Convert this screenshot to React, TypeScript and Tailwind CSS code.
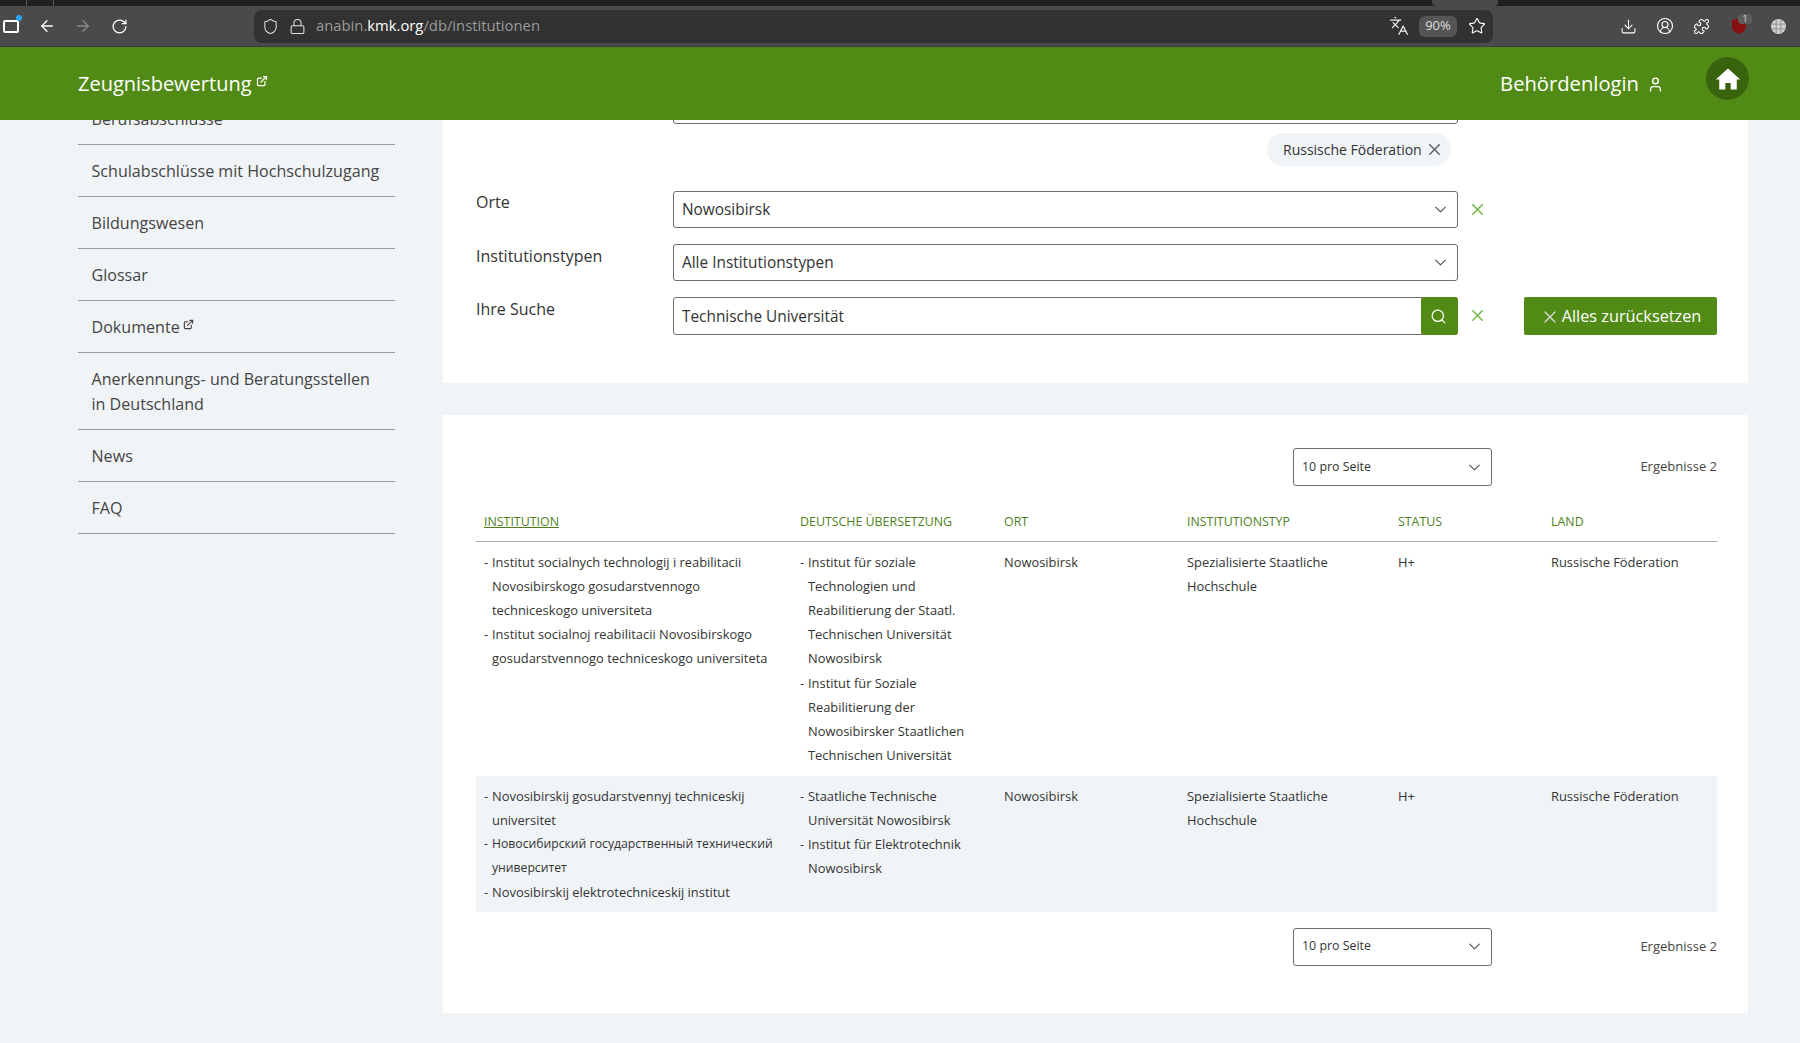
import { ArrowLeft, ArrowRight, ChevronDown, Download, ExternalLink, Languages, Lock, RotateCw, Search, Shield, Star, Puzzle, CircleUserRound, User, X } from "lucide-react";

const nav = [
  ["Berufsabschlüsse", false],
  ["Schulabschlüsse mit Hochschulzugang", false],
  ["Bildungswesen", false],
  ["Glossar", false],
  ["Dokumente", true],
  ["Anerkennungs- und Beratungsstellen in Deutschland", false],
  ["News", false],
  ["FAQ", false],
] as const;

const rows = [
  {
    a: ["Institut socialnych technologij i reabilitacii Novosibirskogo gosudarstvennogo techniceskogo universiteta", "Institut socialnoj reabilitacii Novosibirskogo gosudarstvennogo techniceskogo universiteta"],
    b: ["Institut für soziale Technologien und Reabilitierung der Staatl. Technischen Universität Nowosibirsk", "Institut für Soziale Reabilitierung der Nowosibirsker Staatlichen Technischen Universität"],
    tint: false,
  },
  {
    a: ["Novosibirskij gosudarstvennyj techniceskij universitet", "Новосибирский государственный технический университет", "Novosibirskij elektrotechniceskij institut"],
    b: ["Staatliche Technische Universität Nowosibirsk", "Institut für Elektrotechnik Nowosibirsk"],
    tint: true,
  },
];

function Dashed({ items, gap = "" }: { items: string[]; gap?: string }) {
  return (
    <ul className={gap}>
      {items.map((t) => (
        <li key={t} className={`relative pl-2 ${/[а-я]/.test(t) ? "text-[12.2px]" : ""}`}>
          <span className="absolute left-0 top-0">-</span>
          {t}
        </li>
      ))}
    </ul>
  );
}

function Select({ label }: { label: string }) {
  return (
    <div className="flex h-[37px] w-[785px] items-center justify-between rounded-[3px] border border-[#6e6e6e] bg-white pl-2 pr-[7px] text-[15.4px] text-[#333]">
      <span className="mt-[1px]">{label}</span>
      <ChevronDown size={19} strokeWidth={1.5} className="text-[#555]" />
    </div>
  );
}

function Pager({ className }: { className: string }) {
  return (
    <div className={`flex items-center justify-end ${className}`}>
      <div className="flex h-[38px] w-[199px] items-center justify-between rounded-[3px] border border-[#6e6e6e] bg-white pl-2 pr-[7px] text-[12.4px] text-[#333]">
        <span>10 pro Seite</span>
        <ChevronDown size={19} strokeWidth={1.5} className="text-[#555]" />
      </div>
      <div className="w-[225px] text-right text-[13px] text-[#444]">Ergebnisse 2</div>
    </div>
  );
}

export default function App() {
  return (
    <div className="flex h-[1043px] w-[1800px] flex-col overflow-hidden bg-[#f1f4f7] font-['Open_Sans',sans-serif] text-[#333]">
      {/* Browser chrome */}
      <div className="flex h-[6px] bg-[#202020]">
        <span className="ml-[26px] w-px bg-[#555]" />
        <span className="ml-[26px] w-px bg-[#555]" />
        <span className="ml-[1378px] w-[66px] rounded-b bg-[#4a4a4a]" />
      </div>
      <div className="flex h-[41px] items-center border-b border-[#3c3c3c] bg-[#4a4a4a] text-white">
        <div className="relative ml-[3px] h-[13px] w-[16px] rounded-[2px] border-2 border-white">
          <span className="absolute -right-[5px] -top-[7px] h-[6px] w-[6px] rounded-full bg-[#2aa5f5]" />
        </div>
        <ArrowLeft size={18} strokeWidth={1.75} className="ml-[19px]" />
        <ArrowRight size={18} strokeWidth={1.75} className="ml-[18px] text-[#8a8a8a]" />
        <RotateCw size={17} strokeWidth={1.75} className="ml-[19px]" />
        <div className="ml-[126px] flex h-[33px] w-[1239px] items-center rounded-lg bg-[#323232] pl-[8px] pr-[7px]">
          <Shield size={17} strokeWidth={1.5} className="text-[#ddd]" />
          <Lock size={17} strokeWidth={1.5} className="ml-[10px] text-[#ddd]" />
          <span className="mb-[1px] ml-[10px] text-[14.8px] text-[#9a9a9a]">
            anabin.<span className="text-white">kmk.org</span>/db/institutionen
          </span>
          <Languages size={20} strokeWidth={1.5} className="ml-auto text-[#eee]" />
          <span className="ml-[10px] flex h-[21px] w-[38px] items-center justify-center rounded-md bg-[#555] text-[13px] text-[#ddd]">90%</span>
          <Star size={18} strokeWidth={1.5} className="ml-[11px]" />
        </div>
        <Download size={17} strokeWidth={1.5} className="ml-[127px]" />
        <CircleUserRound size={18} strokeWidth={1.5} className="ml-[19px]" />
        <Puzzle size={17} strokeWidth={1.5} className="ml-[19px]" />
        <div className="relative ml-[22px]">
          <svg viewBox="0 0 14 16" className="h-[16px] w-[14px]">
            <path d="M0 2 7 .5 14 2v6c0 4-3 6.500-7 8-4-1.500-7-4-7-8z" fill="#8a1010" />
          </svg>
          <span className="absolute -right-[6px] -top-[4px] flex h-[10px] w-[14px] items-center justify-center rounded-sm bg-[#5e5e5e] text-[9px] text-[#ddd]">1</span>
        </div>
        <svg viewBox="0 0 16 16" className="ml-[25px] h-[15px] w-[15px]" fill="none" stroke="#8e8e8e" strokeWidth="1">
          <circle cx="8" cy="8" r="8" fill="#cfcfcf" stroke="none" />
          <path d="M1 5.500h14M1 10.500h14M5.500 1v14M10.500 1v14" />
        </svg>
      </div>

      {/* Green header */}
      <header className="relative z-10 flex h-[73px] shrink-0 items-center bg-[#518b15] pl-[78px] text-white">
        <span className="text-[20px]">Zeugnisbewertung</span>
        <ExternalLink size={12} strokeWidth={2.5} className="mb-[6px] ml-[4px]" />
        <span className="ml-auto text-[20.2px]">Behördenlogin</span>
        <User size={17} strokeWidth={2} className="ml-[8px] mt-[2px]" />
        <div className="mb-[10px] ml-[42px] mr-[51px] flex h-[43px] w-[43px] items-center justify-center rounded-full bg-[#38640e]">
          <svg viewBox="0 0 24 24" className="h-[28px] w-[28px] fill-white">
            <path d="M12 3 1.500 12.400h3V21h5.200v-5.600h4.600V21h5.200v-8.600h3L12 3z" />
          </svg>
        </div>
      </header>

      {/* Body */}
      <div className="flex min-h-0 flex-1 overflow-hidden">
        <aside className="ml-[78px] w-[317px] shrink-0">
          <ul className="-mt-[27px] text-[16.1px] leading-[25px] text-[#444]">
            {nav.map(([t, ext]) => (
              <li key={t} className="border-b border-[#9c9c9c] px-[13.500px] pb-[12px] pt-[14px]">
                {t}
                {ext && <ExternalLink size={11} strokeWidth={2.5} className="mb-2 ml-[3px] inline" />}
              </li>
            ))}
          </ul>
        </aside>

        <main className="ml-[48px] w-[1305px] shrink-0">
          <section className="h-[296px] bg-white pl-[33px] pr-[31px]">
            <div className="ml-[197px] -mt-[33px]">
              <Select label="" />
            </div>
            <div className="ml-[197px] mt-[9px] flex w-[785px] justify-end pr-[7px]">
              <div className="flex h-[33px] w-[184px] items-center gap-[3px] rounded-full bg-[#f1f4f7] pl-[16px] text-[14px] text-[#333]">
                Russische Föderation
                <X size={19} strokeWidth={1.5} className="text-[#555]" />
              </div>
            </div>
            <div className="mt-[25px] flex h-[37px]">
              <label className="w-[197px] text-[16px] leading-[22px]">Orte</label>
              <Select label="Nowosibirsk" />
              <X size={19} strokeWidth={1.75} className="ml-[10px] mt-[9px] text-[#6db33f]" />
            </div>
            <div className="mt-[16px] flex h-[37px]">
              <label className="w-[197px] pt-[1px] text-[16px] leading-[22px]">Institutionstypen</label>
              <Select label="Alle Institutionstypen" />
            </div>
            <div className="mt-[16px] flex h-[38px]">
              <label className="w-[197px] pt-[1px] text-[16px] leading-[22px]">Ihre Suche</label>
              <div className="flex w-[785px] rounded-[3px] border border-[#6e6e6e] bg-white pl-2 text-[15.4px]">
                <span className="mt-[1px] flex-1 self-center">Technische Universität</span>
                <div className="-my-px -mr-px flex w-[37px] items-center justify-center rounded-[3px] bg-[#518b15] pr-[2px] text-white">
                  <Search size={17} strokeWidth={1.75} />
                </div>
              </div>
              <X size={19} strokeWidth={1.75} className="ml-[10px] mt-[9px] text-[#6db33f]" />
              <div className="ml-[37px] flex w-[193px] items-center justify-center gap-[2px] rounded-[2px] bg-[#518b15] pt-[1px] text-[16.3px] text-white">
                <X size={20} strokeWidth={1.5} className="text-[#ddd]" />
                Alles zurücksetzen
              </div>
            </div>
          </section>
          <section className="mt-[32px] h-[598px] bg-white pl-[33px] pr-[31px] pt-[33px]">
            <Pager className="" />
            <table className="mt-[17px] w-[1241px] table-fixed border-collapse text-left text-[12.9px] leading-[24px] text-[#333]">
              <colgroup>
                <col className="w-[316px]" />
                <col className="w-[204px]" />
                <col className="w-[183px]" />
                <col className="w-[211px]" />
                <col className="w-[153px]" />
                <col className="w-[174px]" />
              </colgroup>
              <thead>
                <tr className="h-[38px] border-b border-[#aaa] text-[12.4px] text-[#4f7f1c]">
                  <th className="pl-[8px] font-normal"><span className="underline">INSTITUTION</span></th>
                  <th className="pl-[8px] font-normal">DEUTSCHE ÜBERSETZUNG</th>
                  <th className="pl-[8px] font-normal">ORT</th>
                  <th className="pl-[8px] font-normal">INSTITUTIONSTYP</th>
                  <th className="pl-[8px] font-normal">STATUS</th>
                  <th className="pl-[8px] font-normal">LAND</th>
                </tr>
              </thead>
              <tbody>
                {rows.map((r, i) => (
                  <tr key={i} className={r.tint ? "bg-[#f1f4f7]" : ""}>
                    <td className={`pl-[8px] pr-[5px] align-top ${i === 0 ? "pb-[9px] pt-[8px]" : "py-[8px]"}`}><Dashed items={r.a} /></td>
                    <td className={`pl-[8px] pr-[22px] align-top ${i === 0 ? "pb-[9px] pt-[8px]" : "py-[8px]"}`}><Dashed items={r.b} gap={i === 0 ? "space-y-px" : ""} /></td>
                    <td className="pl-[8px] pt-[8px] align-top">Nowosibirsk</td>
                    <td className="pl-[8px] pr-[30px] pt-[8px] align-top">Spezialisierte Staatliche Hochschule</td>
                    <td className="pl-[8px] pt-[8px] align-top">H+</td>
                    <td className="pl-[8px] pt-[8px] align-top">Russische Föderation</td>
                  </tr>
                ))}
              </tbody>
            </table>
            <Pager className="mt-[16px]" />
          </section>
        </main>
      </div>
    </div>
  );
}
